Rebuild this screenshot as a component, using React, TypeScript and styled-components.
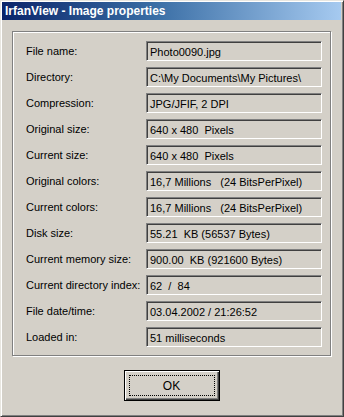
import React from "react";
import styled, { createGlobalStyle } from "styled-components";

const Global = createGlobalStyle`
  html, body { margin: 0; padding: 0; background: #D4D0C8; }
  body { font-family: "Liberation Sans", Arial, sans-serif; font-size: 11px; color: #000; }
`;

const Window = styled.div`
  box-sizing: border-box;
  width: 344px;
  height: 417px;
  background: #d4d0c8;
  border-style: solid;
  border-width: 1px;
  border-color: #e8e6e0 #404040 #404040 #e8e6e0;
  box-shadow: inset 1px 1px 0 #ffffff, inset -1px -1px 0 #808080;
  padding: 1px 2px 2px 1px;
  display: flex;
  flex-direction: column;
`;

const TitleBar = styled.div`
  height: 18px;
  background: linear-gradient(to right, #0a246a 0%, #3a6ea5 45%, #a6caf0 100%);
  color: #fff;
  font-weight: bold;
  font-size: 12px;
  line-height: 18px;
  padding-left: 3px;
  white-space: nowrap;
`;

const Body = styled.div`
  flex: 1;
  display: flex;
  flex-direction: column;
  align-items: flex-start;
  padding: 11px 0 0 10px;
`;

const GroupBox = styled.div`
  box-sizing: border-box;
  width: 319px;
  height: 325px;
  border: 1px solid #808080;
  box-shadow: inset 1px 1px 0 #ffffff, 1px 1px 0 #ffffff;
  padding: 9px 8px 0 13px;
  display: grid;
  grid-template-columns: 120px 1fr;
  grid-auto-rows: 20px;
  row-gap: 6px;
  align-content: start;
`;

const Label = styled.div`
  display: flex;
  align-items: center;
  white-space: nowrap;
`;

const Field = styled.div`
  box-sizing: border-box;
  border-style: solid;
  border-width: 1px;
  border-color: #808080 #ffffff #ffffff #808080;
  box-shadow: inset 1px 1px 0 #404040;
  display: flex;
  align-items: center;
  padding: 1px 0 0 3px;
  white-space: pre;
`;

const ButtonRow = styled.div`
  align-self: stretch;
  display: flex;
  justify-content: center;
  margin-top: 14px;
  padding-right: 0px;
`;

const OkButton = styled.button`
  position: relative;
  box-sizing: border-box;
  width: 96px;
  height: 31px;
  margin-left: -10px;
  background: #d4d0c8;
  border: 1px solid #000;
  box-shadow: inset 1px 1px 0 #ffffff, inset -1px -1px 0 #404040, inset -2px -2px 0 #808080;
  font-family: "Liberation Sans", Arial, sans-serif;
  font-size: 12px;
  color: #000;
  padding: 0;
  &::after {
    content: "";
    position: absolute;
    left: 4px;
    top: 4px;
    right: 4px;
    bottom: 4px;
    border: 1px dotted #000;
  }
`;

const rows: [string, string][] = [
  ["File name:", "Photo0090.jpg"],
  ["Directory:", "C:\\My Documents\\My Pictures\\"],
  ["Compression:", "JPG/JFIF, 2 DPI"],
  ["Original size:", "640 x 480  Pixels"],
  ["Current size:", "640 x 480  Pixels"],
  ["Original colors:", "16,7 Millions   (24 BitsPerPixel)"],
  ["Current colors:", "16,7 Millions   (24 BitsPerPixel)"],
  ["Disk size:", "55.21  KB (56537 Bytes)"],
  ["Current memory size:", "900.00  KB (921600 Bytes)"],
  ["Current directory index:", "62  /  84"],
  ["File date/time:", "03.04.2002 / 21:26:52"],
  ["Loaded in:", "51 milliseconds"],
];

export default function App() {
  return (
    <>
      <Global />
      <Window>
        <TitleBar>IrfanView - Image properties</TitleBar>
        <Body>
          <GroupBox>
            {rows.map(([l, v]) => (
              <React.Fragment key={l}>
                <Label>{l}</Label>
                <Field>{v}</Field>
              </React.Fragment>
            ))}
          </GroupBox>
          <ButtonRow>
            <OkButton>OK</OkButton>
          </ButtonRow>
        </Body>
      </Window>
    </>
  );
}
